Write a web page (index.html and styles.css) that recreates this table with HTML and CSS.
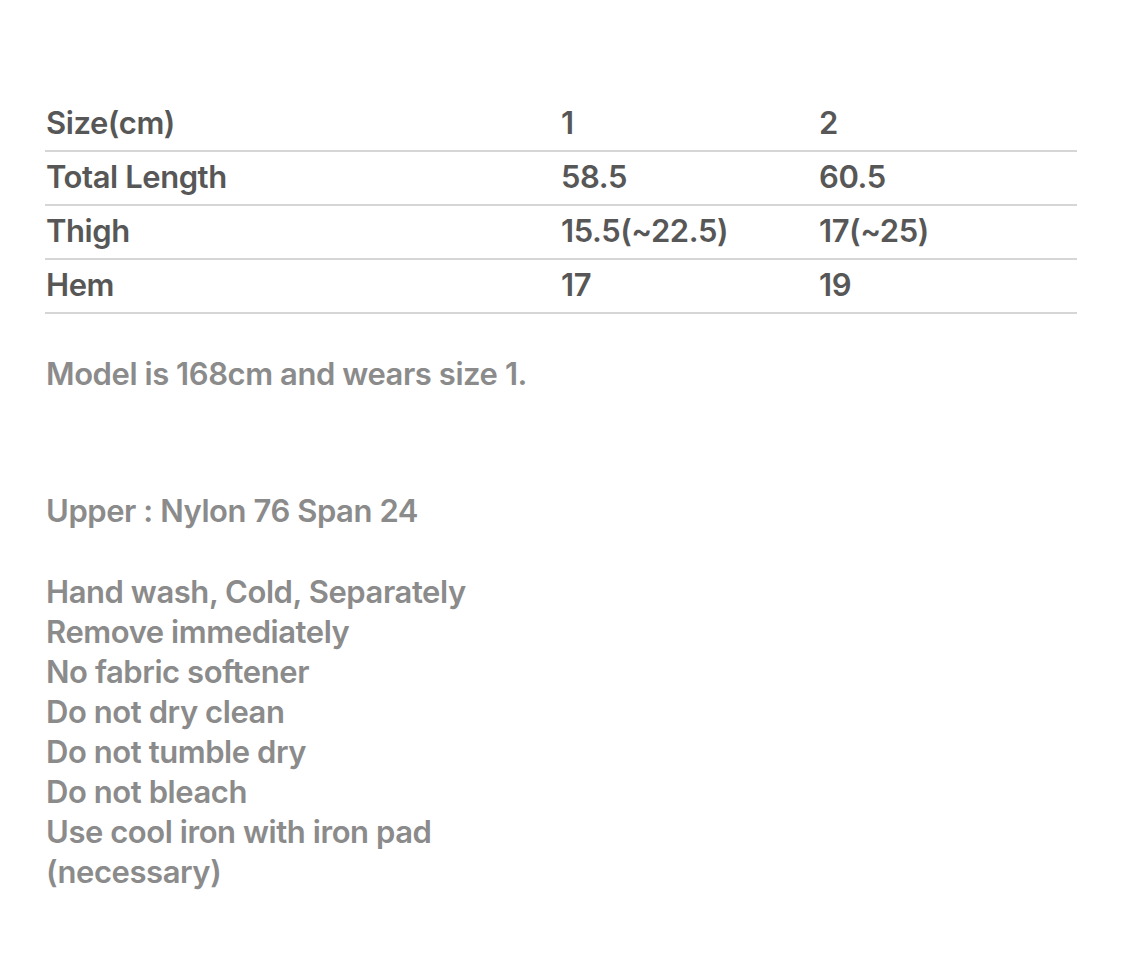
FILE: index.html
```html
<!DOCTYPE html>
<html lang="en">
<head>
<meta charset="utf-8">
<title>Size guide</title>
<link rel="stylesheet" href="styles.css">
</head>
<body>
<main class="page">
  <div class="size-table">
    <div class="row"><span>Size(cm)</span><span>1</span><span>2</span></div>
    <div class="row"><span>Total Length</span><span>58.5</span><span>60.5</span></div>
    <div class="row"><span>Thigh</span><span>15.5(~22.5)</span><span>17(~25)</span></div>
    <div class="row"><span>Hem</span><span>17</span><span>19</span></div>
  </div>
  <p class="note model">Model is 168cm and wears size 1.</p>
  <p class="note material">Upper : Nylon 76 Span 24</p>
  <ul class="note care">
    <li>Hand wash, Cold, Separately</li>
    <li>Remove immediately</li>
    <li>No fabric softener</li>
    <li>Do not dry clean</li>
    <li>Do not tumble dry</li>
    <li>Do not bleach</li>
    <li>Use cool iron with iron pad</li>
    <li>(necessary)</li>
  </ul>
</main>
</body>
</html>
```

FILE: styles.css
```css
html, body {
  margin: 0;
  padding: 0;
  background: #ffffff;
}

.page {
  width: 1032px;
  padding: 98px 0 0 45px;
  font-family: "Inter", "Liberation Sans", sans-serif;
  font-weight: 600;
  font-size: 31px;
  letter-spacing: -0.014em;
}

.size-table {
  display: flex;
  flex-direction: column;
  color: #575757;
}

.row {
  display: grid;
  grid-template-columns: 516px 258px 258px;
  height: 52px;
  line-height: 50px;
  border-bottom: 2px solid #d6d6d6;
}

.row span:first-child {
  padding-left: 1px;
}

.note {
  margin: 0;
  padding: 0 0 0 1px;
  color: #8b8b8b;
  line-height: 40px;
}

.model {
  margin-top: 40px;
}

.material {
  margin-top: 97px;
}

.care {
  list-style: none;
  margin-top: 41px;
}
```
